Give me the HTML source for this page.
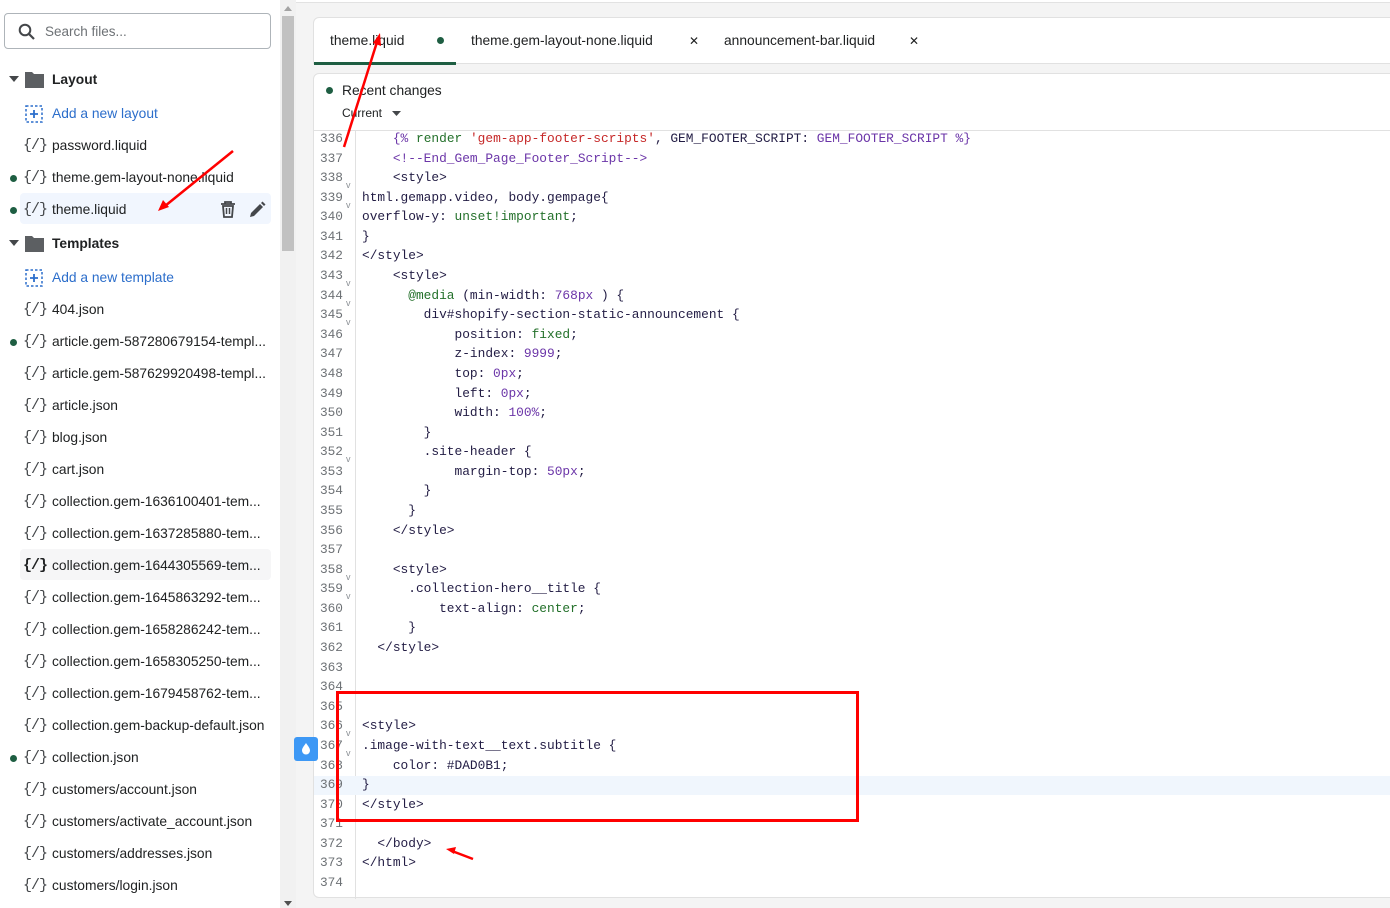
<!DOCTYPE html>
<html><head><meta charset="utf-8"><style>
*{margin:0;padding:0;box-sizing:border-box}
body{width:1390px;height:908px;overflow:hidden;background:#f4f4f4;font-family:"Liberation Sans",sans-serif;position:relative}
.side{position:absolute;left:0;top:0;width:280px;height:908px;background:#fff}
.topline{position:absolute;left:0;top:0;width:1390px;height:3px;background:#fff;border-bottom:1px solid #e2e2e2}
.search{position:absolute;left:4px;top:13px;width:267px;height:36px;border:1px solid #aeb4b9;border-radius:4px;background:#fff}
.search span{position:absolute;left:40px;top:10px;font-size:13.5px;color:#6d7175}
.row{position:absolute;left:0;height:30px;width:280px;font-size:13.8px;color:#202223}
.row .t{position:absolute;left:52px;top:8px;white-space:nowrap}
.row .ic{position:absolute;left:23px;top:7px;font-family:"Liberation Mono",monospace;font-size:15px;color:#44474a;letter-spacing:-1px}
.dot{position:absolute;left:10px;top:13px;width:7px;height:7px;border-radius:50%;background:#1e5e42}
.sel{position:absolute;left:20px;width:251px;height:31px;border-radius:4px}
.scroll{position:absolute;left:280px;top:0;width:16px;height:908px;background:#f1f1f1}
.thumb{position:absolute;left:282px;top:16px;width:12px;height:235px;background:#c1c1c1}
.card1{position:absolute;left:313px;top:17px;width:1090px;height:47px;background:#fff;border:1px solid #e1e1e1;border-radius:6px 0 0 0}
.tab{position:absolute;top:15px;font-size:13.8px;color:#202223}
.card2{position:absolute;left:313px;top:73px;width:1090px;height:825px;background:#fff;border:1px solid #e1e1e1;border-radius:6px 0 0 6px}
.ln{position:absolute;left:313px;width:30px;text-align:right;color:#6d7175;font-family:"Liberation Mono",monospace;font-size:12.8px}
.cl{position:absolute;left:362px;white-space:pre;font-family:"Liberation Mono",monospace;font-size:12.85px;color:#221c44}
.fd{position:absolute;left:346px;font-size:9px;color:#8a8f94;font-family:"Liberation Sans",sans-serif}
.g{color:#23702a}.p{color:#6b35a8}.r{color:#c62828}
</style></head><body>
<div class="topline"></div>
<div class="side">
<div class="search"><svg style="position:absolute;left:13px;top:9px" width="18" height="18" viewBox="0 0 18 18"><circle cx="7" cy="7" r="5.3" fill="none" stroke="#44474a" stroke-width="2"/><path d="M11 11l5 5" stroke="#44474a" stroke-width="2.2"/></svg><span>Search files...</span></div>

<div class="row" style="top:64px"><svg style="position:absolute;left:9px;top:12px" width="10" height="7"><path d="M0 0h10L5 6z" fill="#44474a"/></svg><svg style="position:absolute;left:25px;top:7px" width="19" height="17"><path d="M0 1h7l2 2h10v14H0z" fill="#5c5f62"/></svg><span class="t" style="font-weight:bold">Layout</span></div>
<div class="row" style="top:98px"><svg style="position:absolute;left:25px;top:7px" width="18" height="18"><rect x="1" y="1" width="16" height="16" fill="none" stroke="#2c6ecb" stroke-width="1.5" stroke-dasharray="2.5 2"/><path d="M9 5v8M5 9h8" stroke="#2c6ecb" stroke-width="1.8"/></svg><span class="t" style="color:#2c6ecb">Add a new layout</span></div>
<div class="row" style="top:130px"><span class="ic">{/}</span><span class="t">password.liquid</span></div>
<div class="row" style="top:162px"><div class="dot"></div><span class="ic">{/}</span><span class="t">theme.gem-layout-none.liquid</span></div>
<div class="sel" style="top:193px;background:#f1f6fe"></div>
<div class="row" style="top:194px"><div class="dot"></div><span class="ic">{/}</span><span class="t">theme.liquid</span>
<svg style="position:absolute;left:220px;top:7px" width="16" height="17"><path d="M1 3h14M5 3V1h6v2M3 5h10l-1 11H4z" fill="none" stroke="#44474a" stroke-width="1.8"/><path d="M6.5 7v6M9.5 7v6" stroke="#44474a" stroke-width="1.5"/></svg>
<svg style="position:absolute;left:248px;top:7px" width="18" height="18"><path d="M2 16l1-4L12 3l3 3-9 9z" fill="#44474a"/><path d="M13 2l1.5-1.5 3 3L16 5z" fill="#44474a"/></svg></div>
<div class="row" style="top:228px"><svg style="position:absolute;left:9px;top:12px" width="10" height="7"><path d="M0 0h10L5 6z" fill="#44474a"/></svg><svg style="position:absolute;left:25px;top:7px" width="19" height="17"><path d="M0 1h7l2 2h10v14H0z" fill="#5c5f62"/></svg><span class="t" style="font-weight:bold">Templates</span></div>
<div class="row" style="top:262px"><svg style="position:absolute;left:25px;top:7px" width="18" height="18"><rect x="1" y="1" width="16" height="16" fill="none" stroke="#2c6ecb" stroke-width="1.5" stroke-dasharray="2.5 2"/><path d="M9 5v8M5 9h8" stroke="#2c6ecb" stroke-width="1.8"/></svg><span class="t" style="color:#2c6ecb">Add a new template</span></div>
<div class="row" style="top:294px"><span class="ic">{/}</span><span class="t">404.json</span></div>
<div class="row" style="top:326px"><div class="dot"></div><span class="ic">{/}</span><span class="t">article.gem-587280679154-templ...</span></div>
<div class="row" style="top:358px"><span class="ic">{/}</span><span class="t">article.gem-587629920498-templ...</span></div>
<div class="row" style="top:390px"><span class="ic">{/}</span><span class="t">article.json</span></div>
<div class="row" style="top:422px"><span class="ic">{/}</span><span class="t">blog.json</span></div>
<div class="row" style="top:454px"><span class="ic">{/}</span><span class="t">cart.json</span></div>
<div class="row" style="top:486px"><span class="ic">{/}</span><span class="t">collection.gem-1636100401-tem...</span></div>
<div class="row" style="top:518px"><span class="ic">{/}</span><span class="t">collection.gem-1637285880-tem...</span></div>
<div class="sel" style="top:549px;background:#f6f6f7"></div>
<div class="row" style="top:550px"><span class="ic" style="color:#202223;font-weight:bold">{/}</span><span class="t">collection.gem-1644305569-tem...</span></div>
<div class="row" style="top:582px"><span class="ic">{/}</span><span class="t">collection.gem-1645863292-tem...</span></div>
<div class="row" style="top:614px"><span class="ic">{/}</span><span class="t">collection.gem-1658286242-tem...</span></div>
<div class="row" style="top:646px"><span class="ic">{/}</span><span class="t">collection.gem-1658305250-tem...</span></div>
<div class="row" style="top:678px"><span class="ic">{/}</span><span class="t">collection.gem-1679458762-tem...</span></div>
<div class="row" style="top:710px"><span class="ic">{/}</span><span class="t">collection.gem-backup-default.json</span></div>
<div class="row" style="top:742px"><div class="dot"></div><span class="ic">{/}</span><span class="t">collection.json</span></div>
<div class="row" style="top:774px"><span class="ic">{/}</span><span class="t">customers/account.json</span></div>
<div class="row" style="top:806px"><span class="ic">{/}</span><span class="t">customers/activate_account.json</span></div>
<div class="row" style="top:838px"><span class="ic">{/}</span><span class="t">customers/addresses.json</span></div>
<div class="row" style="top:870px"><span class="ic">{/}</span><span class="t">customers/login.json</span></div>
</div>
<div class="scroll"></div><div class="thumb"></div>
<svg style="position:absolute;left:284px;top:6px" width="8" height="6"><path d="M0 5h8L4 0z" fill="#a3a3a3"/></svg>
<svg style="position:absolute;left:284px;top:901px" width="8" height="6"><path d="M0 0h8L4 5z" fill="#505050"/></svg>

<div class="card1">
<span class="tab" style="left:16px">theme.liquid</span>
<div style="position:absolute;left:123px;top:19px;width:7px;height:7px;border-radius:50%;background:#1e5e42"></div>
<div style="position:absolute;left:0;top:44px;width:142px;height:3px;background:#1e5e42"></div>
<span class="tab" style="left:157px">theme.gem-layout-none.liquid</span>
<span class="tab" style="left:375px;font-size:12px;top:16px">✕</span>
<span class="tab" style="left:410px">announcement-bar.liquid</span>
<span class="tab" style="left:595px;font-size:12px;top:16px">✕</span>
</div>
<div class="card2">
<div style="position:absolute;left:12px;top:13px;width:7px;height:7px;border-radius:50%;background:#1e5e42"></div>
<span style="position:absolute;left:28px;top:9px;font-size:13.8px;color:#202223">Recent changes</span>
<span style="position:absolute;left:28px;top:32px;font-size:12px;color:#202223">Current</span>
<svg style="position:absolute;left:78px;top:37px" width="9" height="6"><path d="M0 0h9L4.5 5z" fill="#44474a"/></svg>
<div style="position:absolute;left:0;top:56px;width:1090px;height:1px;background:#e1e1e1"></div>
<div style="position:absolute;left:41px;top:57px;width:1px;height:768px;background:#e1e1e1"></div>
</div>
<div style="position:absolute;left:314px;top:776px;width:1076px;height:19px;background:#f0f6fd"></div>

<div class="ln" style="top:129px;line-height:19.58px">336<br>337<br>338<br>339<br>340<br>341<br>342<br>343<br>344<br>345<br>346<br>347<br>348<br>349<br>350<br>351<br>352<br>353<br>354<br>355<br>356<br>357<br>358<br>359<br>360<br>361<br>362<br>363<br>364<br>365<br>366<br>367<br>368<br>369<br>370<br>371<br>372<br>373<br>374</div>
<span class="fd" style="top:180px">v</span><span class="fd" style="top:200px">v</span><span class="fd" style="top:278px">v</span><span class="fd" style="top:298px">v</span><span class="fd" style="top:317px">v</span><span class="fd" style="top:454px">v</span><span class="fd" style="top:572px">v</span><span class="fd" style="top:591px">v</span><span class="fd" style="top:728px">v</span><span class="fd" style="top:748px">v</span>
<div class="cl" style="top:129px;line-height:19.58px">    <span class="p">{%</span> <span class="g">render</span> <span class="r">'gem-app-footer-scripts'</span>, GEM_FOOTER_SCRIPT: <span class="p">GEM_FOOTER_SCRIPT</span> <span class="p">%}</span>
    <span class="p">&lt;!--End_Gem_Page_Footer_Script--&gt;</span>
    &lt;style&gt;
html.gemapp.video, body.gempage{
overflow-y: <span class="g">unset!important</span>;
}
&lt;/style&gt;
    &lt;style&gt;
      <span class="g">@media</span> (min-width: <span class="p">768px</span> ) {
        div#shopify-section-static-announcement {
            position: <span class="g">fixed</span>;
            z-index: <span class="p">9999</span>;
            top: <span class="p">0px</span>;
            left: <span class="p">0px</span>;
            width: <span class="p">100%</span>;
        }
        .site-header {
            margin-top: <span class="p">50px</span>;
        }
      }
    &lt;/style&gt;

    &lt;style&gt;
      .collection-hero__title {
          text-align: <span class="g">center</span>;
      }
  &lt;/style&gt;



&lt;style&gt;
.image-with-text__text.subtitle {
    color: #DAD0B1;
}
&lt;/style&gt;

  &lt;/body&gt;
&lt;/html&gt;
</div>
<div style="position:absolute;left:294px;top:737px;width:24px;height:24px;background:#3d98f5;border-radius:3px"><svg width="24" height="24"><path d="M12 6c-2 3-4 5-4 7.5a4 4 0 008 0C16 11 14 9 12 6z" fill="#fff"/></svg></div>
<div style="position:absolute;left:336px;top:691px;width:523px;height:131px;border:3px solid #f00"></div>
<svg style="position:absolute;left:0;top:0" width="1390" height="908">
<path d="M233 151L165 206" stroke="#f00" stroke-width="2.5"/><path d="M158 211l5-11 6 7z" fill="#f00"/>
<path d="M344 147L377 42" stroke="#f00" stroke-width="2.5"/><path d="M380 33l1 13-8-3z" fill="#f00"/>
<path d="M473 859L452 851" stroke="#f00" stroke-width="2.5"/><path d="M446 849l10-2-2 7z" fill="#f00"/>
</svg>
</body></html>
